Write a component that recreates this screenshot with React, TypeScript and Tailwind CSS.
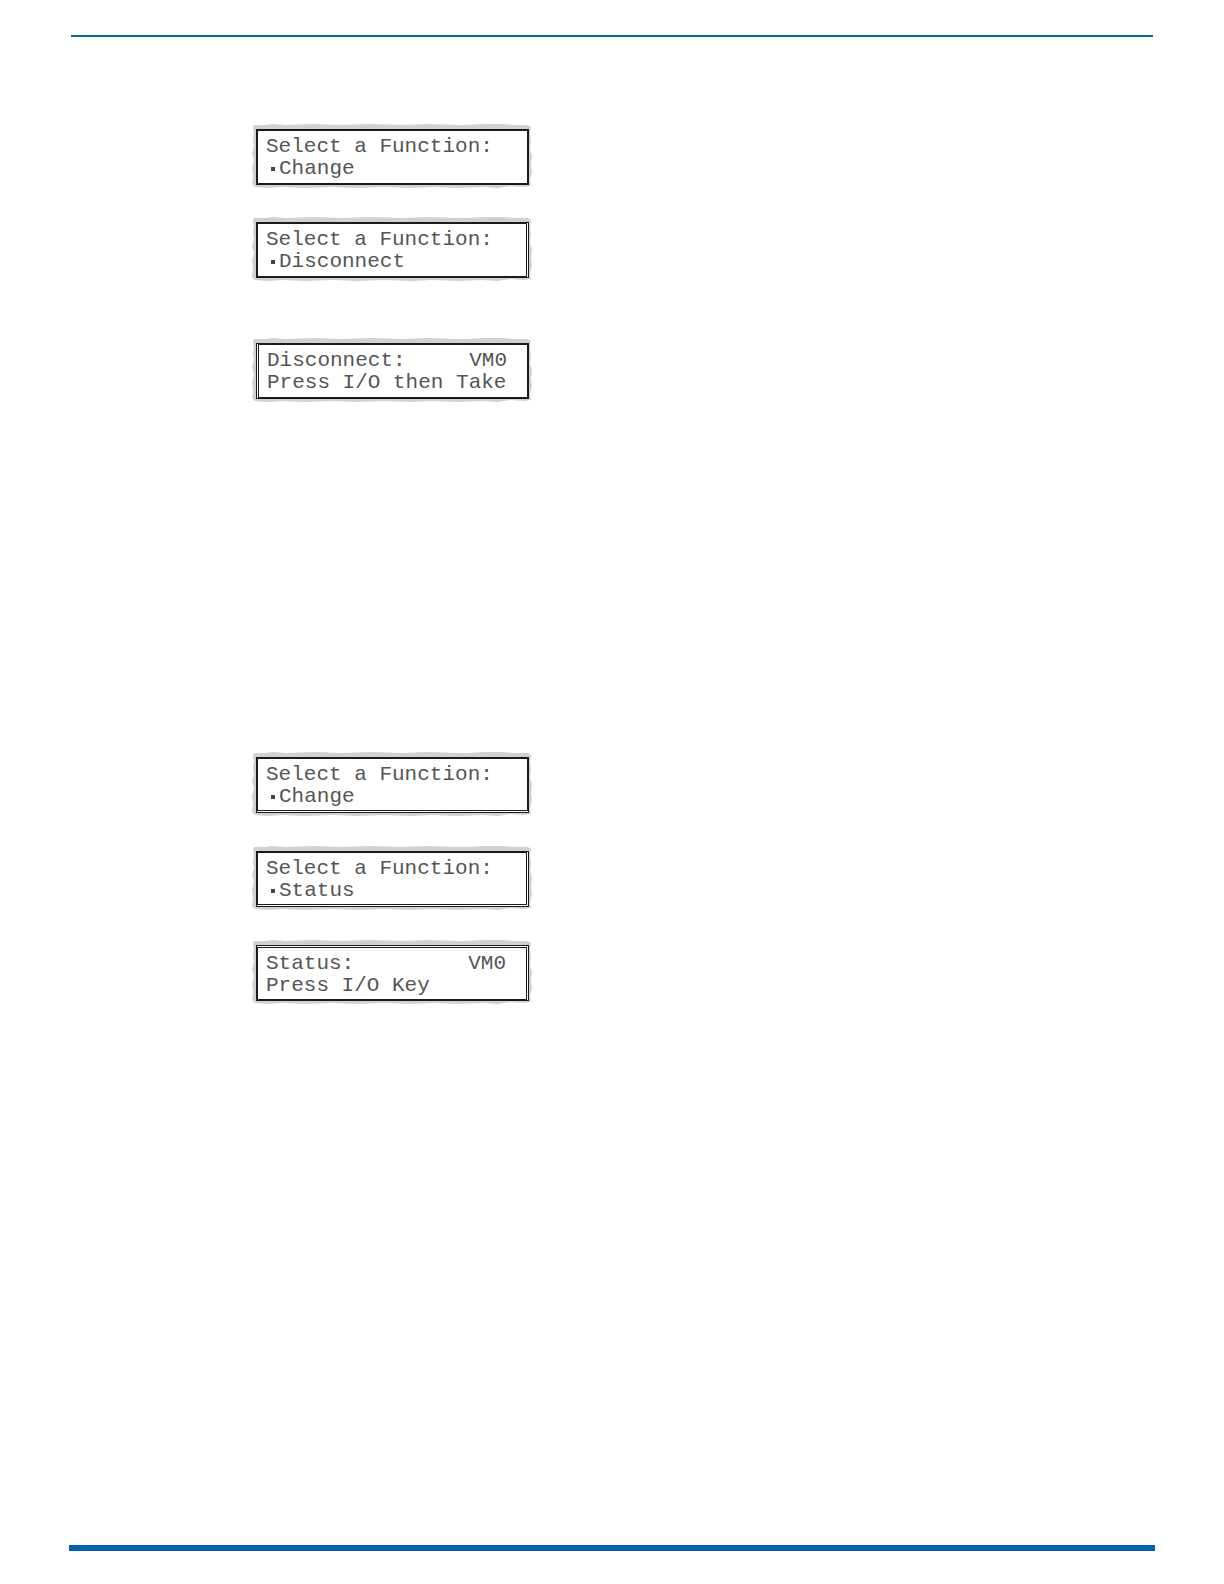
import clsx from 'clsx';

interface Screen {
  title: string;
  unit?: string;
  line: string;
  bullet?: boolean;
  frame?: string;
}

// frames with a doubled edge list the sides that carry it
const disconnectScreens: Screen[] = [
  { title: 'Select a Function:', line: 'Change', bullet: true },
  {
    title: 'Select a Function:',
    line: 'Disconnect',
    bullet: true,
    frame: 'border-r-3 [border-right-style:double]',
  },
  {
    title: 'Disconnect:',
    unit: 'VM0',
    line: 'Press I/O then Take',
    frame: 'border-l-3 [border-left-style:double]',
  },
];

const statusScreens: Screen[] = [
  {
    title: 'Select a Function:',
    line: 'Change',
    bullet: true,
    frame: 'border-b-3 [border-bottom-style:double]',
  },
  {
    title: 'Select a Function:',
    line: 'Status',
    bullet: true,
    frame: 'border-r-3 border-b-3 [border-right-style:double] [border-bottom-style:double]',
  },
  {
    title: 'Status:',
    unit: 'VM0',
    line: 'Press I/O Key',
    frame: 'border-t-3 border-r-3 [border-top-style:double] [border-right-style:double]',
  },
];

function RoughEdge() {
  return (
    <svg
      className="absolute inset-0 h-full w-full"
      viewBox="0 0 280 64"
      preserveAspectRatio="none"
      fill="#d1d1d1"
      aria-hidden="true"
    >
      <path d="M2 1 L14 1 L20 0 L34 1 L62 0 L90 1 L118 0 L150 1 L176 0 L204 1 L214 1 L232 0 L250 0 L262 1 L276 1 L279 3 L278 10 L279 17 L278 26 L280 32 L279 41 L280 48 L278 56 L279 62 L272 63 L258 62 L246 64 L230 63 L206 64 L180 63 L160 64 L132 63 L104 64 L82 63 L52 64 L30 63 L16 64 L3 63 L0 60 L1 52 L0 44 L2 36 L0 29 L2 22 L1 15 L2 9 L1 4 Z" />
    </svg>
  );
}

function LcdScreen({ title, unit, line, bullet, frame }: Screen) {
  return (
    <div className="relative h-16 w-[280px] pt-[5px] pr-[3px] pb-[3px] pl-1">
      <RoughEdge />
      <div
        className={clsx(
          'relative h-full border-2 border-[#1c1a1b] bg-white pt-[5px] pr-5 pl-2',
          "font-['Liberation_Mono',monospace] text-[21px] leading-[22px] whitespace-nowrap text-[#555]",
          frame,
        )}
      >
        <div className="flex justify-between">
          <span>{title}</span>
          {unit && <span>{unit}</span>}
        </div>
        <div className="flex items-center">
          {bullet && (
            <span className="flex w-[13px] justify-center">
              <span className="h-1 w-1 bg-[#444]" />
            </span>
          )}
          <span>{line}</span>
        </div>
      </div>
    </div>
  );
}

export default function App() {
  return (
    <div className="flex min-h-screen flex-col bg-white pt-[35px] pb-[33px]">
      <header className="mx-[71px] h-0.5 bg-[#0b6692]" />

      <main className="flex-1 pt-[87px] pl-[252px]">
        <section className="flex flex-col gap-[29px]">
          {disconnectScreens.slice(0, 2).map((screen) => (
            <LcdScreen key={screen.line} {...screen} />
          ))}
        </section>
        <section className="mt-[57px]">
          <LcdScreen {...disconnectScreens[2]} />
        </section>
        <section className="mt-[350px] flex flex-col gap-[30px]">
          {statusScreens.map((screen) => (
            <LcdScreen key={screen.line} {...screen} />
          ))}
        </section>
      </main>

      <footer className="mx-[69px] h-1.5 bg-[#0060a8]" />
    </div>
  );
}
